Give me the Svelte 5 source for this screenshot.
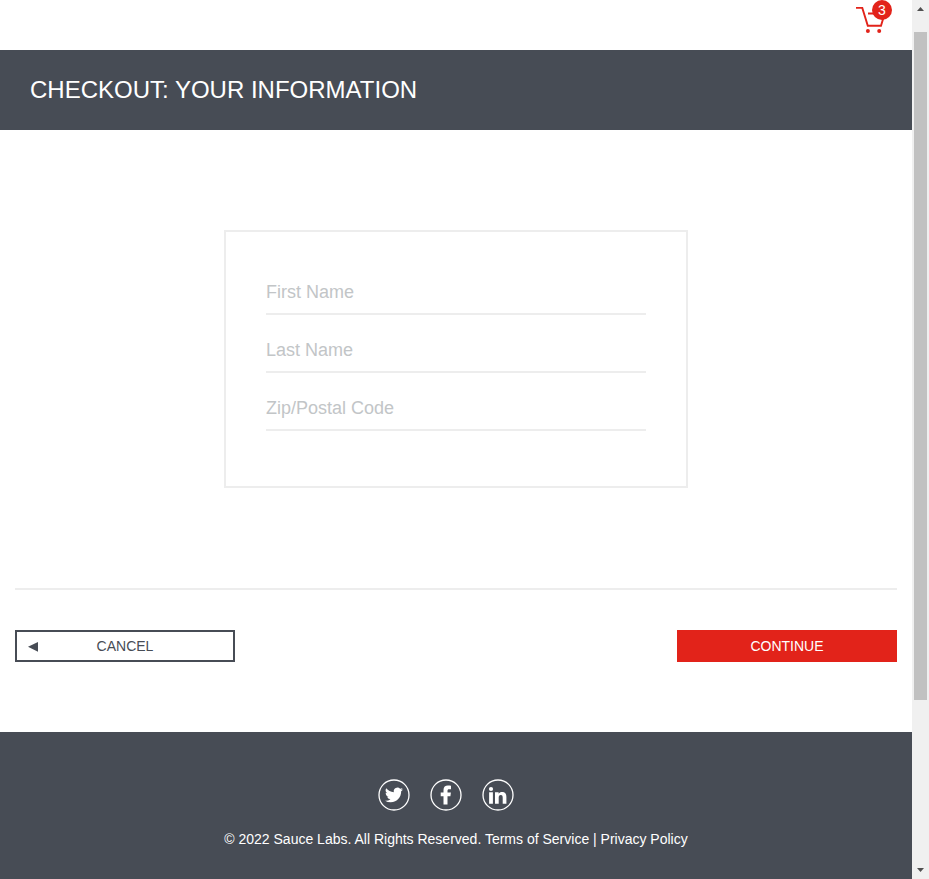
<script>
  const fields = $state([
    { id: 'first-name', label: 'First Name', value: '' },
    { id: 'last-name', label: 'Last Name', value: '' },
    { id: 'postal-code', label: 'Zip/Postal Code', value: '' }
  ]);
  const cartCount = 3;
</script>

<div class="window">
  <div class="page">
    <header>
      <a class="cart" href="#cart" aria-label="Cart">
        <svg width="40" height="38" viewBox="0 0 40 38" fill="none" stroke="#e2231a" stroke-width="1.9">
          <path d="M4 7.9H10.3L15.8 25.8H29L32.7 13.5H16" />
          <circle cx="15.9" cy="31" r="2" fill="#e2231a" stroke="none" />
          <circle cx="27.2" cy="31" r="2" fill="#e2231a" stroke="none" />
        </svg>
        <span class="badge">{cartCount}</span>
      </a>
    </header>

    <div class="titlebar"><span class="title">Checkout: Your Information</span></div>

    <main>
      <form>
        {#each fields as field (field.id)}
          <input id={field.id} placeholder={field.label} bind:value={field.value} />
        {/each}
      </form>
      <div class="actions">
        <button class="cancel" type="button">
          <svg width="10" height="11" viewBox="0 0 10 11"><path d="M10 .9V10.7L0 5.8Z" fill="#474c55" /></svg>
          <span>Cancel</span>
        </button>
        <button class="continue" type="button"><span>Continue</span></button>
      </div>
    </main>

    <footer>
      <div class="social">
        <svg width="32" height="32" viewBox="0 0 32 32">
          <circle cx="16" cy="16" r="15" fill="none" stroke="#fff" stroke-width="1.3" />
          <g transform="translate(7 7) scale(.75)">
            <path fill="#fff" d="M23.95 4.57a10 10 0 0 1-2.82.77 4.96 4.96 0 0 0 2.16-2.72c-.95.55-2 .95-3.13 1.18a4.92 4.92 0 0 0-8.38 4.48C7.69 8.1 4.07 6.13 1.64 3.16a4.9 4.9 0 0 0 1.52 6.57 4.9 4.9 0 0 1-2.23-.61v.06a4.92 4.92 0 0 0 3.95 4.83 5 5 0 0 1-2.22.08 4.94 4.94 0 0 0 4.6 3.42A9.87 9.87 0 0 1 0 19.54a14 14 0 0 0 7.55 2.21c9.05 0 14-7.5 14-13.98 0-.21 0-.42-.02-.63a9.94 9.94 0 0 0 2.42-2.57z" />
          </g>
        </svg>
        <svg width="32" height="32" viewBox="0 0 32 32">
          <circle cx="16" cy="16" r="15" fill="none" stroke="#fff" stroke-width="1.3" />
          <path fill="#fff" d="M13.5 25.5V17.2H10.7V13.4H13.5V11C13.5 8 15.2 6.6 17.9 6.6C19.1 6.6 20.2 6.7 21 6.8V10.2H19.2C17.8 10.2 17.5 10.9 17.5 11.8V13.4H20.9L20.4 17.2H17.5V25.5Z" />
        </svg>
        <svg width="32" height="32" viewBox="0 0 32 32">
          <circle cx="16" cy="16" r="15" fill="none" stroke="#fff" stroke-width="1.3" />
          <circle cx="9" cy="10" r="2.1" fill="#fff" />
          <path fill="#fff" d="M7.1 13.3H10.9V24.7H7.1ZM13 13.3H16.6V14.8C17.3 13.6 18.5 13 20.1 13C23.5 13 24.4 15.2 24.4 18V24.7H20.7V18.8C20.7 17.4 20.4 16 18.8 16C17.2 16 16.7 17.2 16.7 18.7V24.7H13Z" />
        </svg>
      </div>
      <div class="copy">© 2022 Sauce Labs. All Rights Reserved. Terms of Service | Privacy Policy</div>
    </footer>
  </div>

  <div class="scrollbar">
    <svg width="7" height="4" viewBox="0 0 7 4"><path d="M0 4L3.5 0L7 4Z" fill="#505050" /></svg>
    <div class="thumb"></div>
    <svg class="down" width="7" height="4" viewBox="0 0 7 4"><path d="M0 0H7L3.5 4Z" fill="#505050" /></svg>
  </div>
</div>

<style>
  :global(body) {
    margin: 0;
    overflow: hidden;
  }
  .window {
    display: flex;
    width: 929px;
    height: 879px;
    background: #fff;
    font-family: "Liberation Sans", Arial, sans-serif;
  }
  .window * {
    box-sizing: border-box;
  }
  .page {
    width: 912px;
    display: flex;
    flex-direction: column;
  }
  svg {
    display: block;
    flex: none;
  }
  header {
    height: 50px;
    display: flex;
    justify-content: flex-end;
    padding-right: 20px;
  }
  .cart {
    position: relative;
    width: 40px;
    height: 38px;
    text-decoration: none;
  }
  .badge {
    position: absolute;
    left: 20px;
    top: 0;
    width: 20px;
    height: 20px;
    border-radius: 50%;
    background: #e2231a;
    color: #fff;
    font-size: 14px;
    line-height: 20px;
    text-align: center;
  }
  .titlebar {
    height: 80px;
    padding: 0 30px;
    background: #474c55;
    color: #fff;
    display: flex;
    align-items: center;
    font-size: 24px;
    text-transform: uppercase;
  }
  main {
    height: 602px;
    padding: 100px 15px 0;
    display: flex;
    flex-direction: column;
  }
  form {
    align-self: center;
    width: 464px;
    height: 258px;
    border: 2px solid #ededed;
    padding: 38px 40px;
    display: flex;
    flex-direction: column;
    gap: 13px;
  }
  input {
    width: 100%;
    height: 45px;
    border: 0;
    border-bottom: 2px solid #ededed;
    padding: 2px 0 0;
    background: transparent;
    font: 18px "Liberation Sans", Arial, sans-serif;
    color: #474c55;
    outline: none;
  }
  input::placeholder {
    color: #c2c5c7;
    opacity: 1;
  }
  .actions {
    margin-top: 100px;
    border-top: 2px solid #ededed;
    padding-top: 40px;
    display: flex;
    justify-content: space-between;
  }
  button {
    width: 220px;
    height: 32px;
    display: flex;
    align-items: center;
    padding: 0;
    border-radius: 0;
    font: 14px "Liberation Sans", Arial, sans-serif;
    text-transform: uppercase;
  }
  button span {
    flex: 1;
    text-align: center;
  }
  .cancel {
    border: 2px solid #474c55;
    background: #fff;
    color: #474c55;
    padding: 0 21px 0 11px;
  }
  .continue {
    border: 0;
    background: #e2231a;
    color: #fff;
  }
  footer {
    flex: 1;
    background: #474c55;
    color: #fff;
    padding-top: 47px;
    display: flex;
    flex-direction: column;
    align-items: center;
  }
  .social {
    display: flex;
    gap: 20px;
    margin-right: 20px;
  }
  .copy {
    margin-top: 20px;
    font-size: 14px;
    line-height: 16px;
    white-space: nowrap;
  }
  .scrollbar {
    width: 17px;
    background: #f0f0f0;
    display: flex;
    flex-direction: column;
    align-items: center;
    padding: 7px 0;
  }
  .thumb {
    width: 13px;
    height: 668px;
    margin-top: 21px;
    background: #c1c1c1;
  }
  .down {
    margin-top: auto;
  }
</style>
